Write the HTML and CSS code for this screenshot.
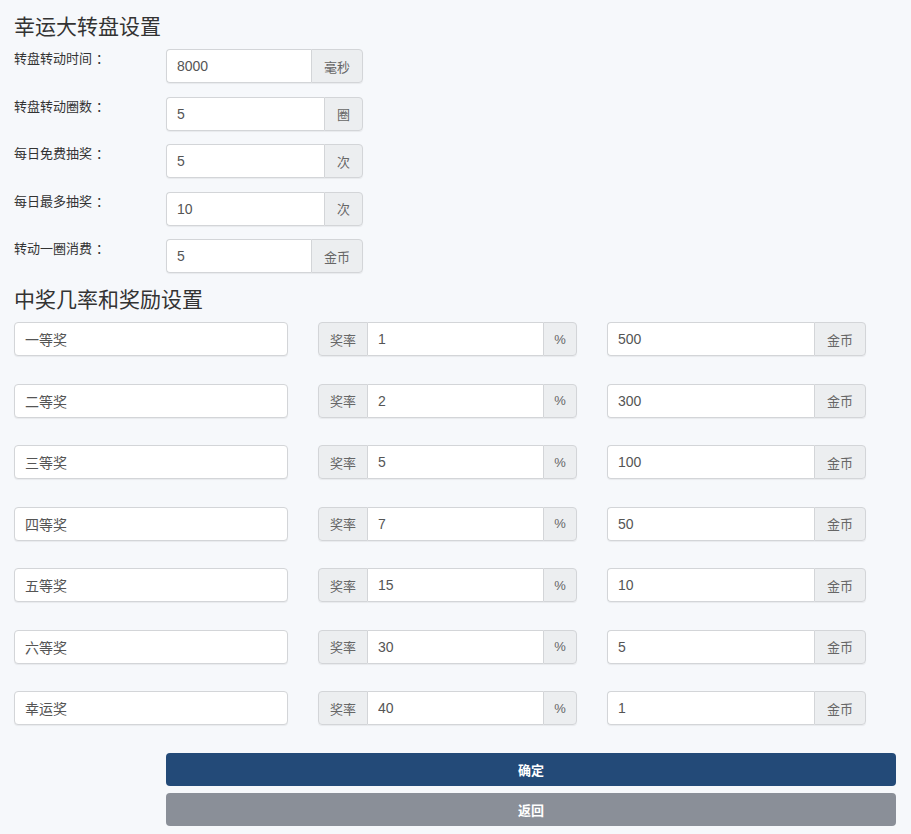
FILE: index.html
```html
<!DOCTYPE html>
<html lang="zh">
<head>
<meta charset="utf-8">
<title>幸运大转盘设置</title>
<link rel="stylesheet" href="styles.css">
</head>
<body>
<div class="page">
  <h2 class="title first">幸运大转盘设置</h2>
  <div class="row">
    <label class="label">转盘转动时间<span class="colon">：</span></label>
    <div class="group g-basic"><input class="ctrl" value="8000"><span class="addon">毫秒</span></div>
  </div>
  <div class="row">
    <label class="label">转盘转动圈数<span class="colon">：</span></label>
    <div class="group g-basic"><input class="ctrl" value="5"><span class="addon">圈</span></div>
  </div>
  <div class="row">
    <label class="label">每日免费抽奖<span class="colon">：</span></label>
    <div class="group g-basic"><input class="ctrl" value="5"><span class="addon">次</span></div>
  </div>
  <div class="row">
    <label class="label">每日最多抽奖<span class="colon">：</span></label>
    <div class="group g-basic"><input class="ctrl" value="10"><span class="addon">次</span></div>
  </div>
  <div class="row">
    <label class="label">转动一圈消费<span class="colon">：</span></label>
    <div class="group g-basic"><input class="ctrl" value="5"><span class="addon">金币</span></div>
  </div>

  <h2 class="title second">中奖几率和奖励设置</h2>
  <div class="prizes">
    <div class="prize"><input class="ctrl solo name" value="一等奖"><div class="group g-rate"><span class="addon left">奖率</span><input class="ctrl mid" value="1"><span class="addon pct">%</span></div><div class="group g-reward"><input class="ctrl" value="500"><span class="addon">金币</span></div></div>
    <div class="prize"><input class="ctrl solo name" value="二等奖"><div class="group g-rate"><span class="addon left">奖率</span><input class="ctrl mid" value="2"><span class="addon pct">%</span></div><div class="group g-reward"><input class="ctrl" value="300"><span class="addon">金币</span></div></div>
    <div class="prize"><input class="ctrl solo name" value="三等奖"><div class="group g-rate"><span class="addon left">奖率</span><input class="ctrl mid" value="5"><span class="addon pct">%</span></div><div class="group g-reward"><input class="ctrl" value="100"><span class="addon">金币</span></div></div>
    <div class="prize"><input class="ctrl solo name" value="四等奖"><div class="group g-rate"><span class="addon left">奖率</span><input class="ctrl mid" value="7"><span class="addon pct">%</span></div><div class="group g-reward"><input class="ctrl" value="50"><span class="addon">金币</span></div></div>
    <div class="prize"><input class="ctrl solo name" value="五等奖"><div class="group g-rate"><span class="addon left">奖率</span><input class="ctrl mid" value="15"><span class="addon pct">%</span></div><div class="group g-reward"><input class="ctrl" value="10"><span class="addon">金币</span></div></div>
    <div class="prize"><input class="ctrl solo name" value="六等奖"><div class="group g-rate"><span class="addon left">奖率</span><input class="ctrl mid" value="30"><span class="addon pct">%</span></div><div class="group g-reward"><input class="ctrl" value="5"><span class="addon">金币</span></div></div>
    <div class="prize"><input class="ctrl solo name" value="幸运奖"><div class="group g-rate"><span class="addon left">奖率</span><input class="ctrl mid" value="40"><span class="addon pct">%</span></div><div class="group g-reward"><input class="ctrl" value="1"><span class="addon">金币</span></div></div>
  </div>

  <div class="actions">
    <button class="btn primary">确定</button>
    <button class="btn secondary">返回</button>
  </div>
</div>
</body>
</html>
```
FILE: styles.css
```css
html, body {
  margin: 0;
  padding: 0;
  background: #f6f8fb;
}
body {
  font-family: "Liberation Sans", "Noto Sans CJK SC", sans-serif;
  color: #333;
}
.page {
  padding: 0 14px;
}
.title {
  margin: 0;
  font-size: 21px;
  font-weight: normal;
  line-height: 26px;
  color: #333;
}
.title.first {
  padding-top: 14px;
  margin-bottom: 9px;
}
.title.second {
  margin-bottom: 9.5px;
}
.row {
  display: flex;
  align-items: flex-start;
  margin-bottom: 13.5px;
}
.label {
  width: 152px;
  flex: none;
  font-size: 13px;
  line-height: 20px;
  color: #333;
  white-space: nowrap;
}
.colon {
  display: inline-block;
  padding-left: 4px;
}
.group {
  display: flex;
  height: 34px;
  border-radius: 4px;
  box-shadow: 0 1px 1px rgba(0,0,0,.06);
}
.g-basic { width: 197px; }
.g-rate { width: 259px; margin-left: 30px; }
.g-reward { width: 259px; margin-left: 30px; }
.ctrl {
  box-sizing: border-box;
  height: 34px;
  flex: 1 1 auto;
  min-width: 0;
  margin: 0;
  padding: 0 10px;
  border: 1px solid #d3d5d8;
  border-right: 0;
  border-radius: 4px 0 0 4px;
  background: #fff;
  font-family: "Liberation Sans", "Noto Sans CJK SC", sans-serif;
  font-size: 14px;
  color: #555;
  outline: none;
}
.ctrl.solo {
  border-right: 1px solid #d3d5d8;
  border-radius: 4px;
  box-shadow: 0 1px 1px rgba(0,0,0,.06);
}
.ctrl.mid {
  border-radius: 0;
  border-left: 0;
}
.name {
  width: 274px;
  flex: none;
}
.addon {
  box-sizing: border-box;
  flex: none;
  height: 34px;
  padding: 0 12px;
  display: flex;
  align-items: center;
  justify-content: center;
  white-space: nowrap;
  background: #eceef0;
  border: 1px solid #d3d5d8;
  border-radius: 0 4px 4px 0;
  font-size: 13px;
  color: #666;
}
.addon.left {
  width: 50px;
  padding: 0;
  border-radius: 4px 0 0 4px;
  border-right: 1px solid #d3d5d8;
}
.addon.pct {
  width: 34px;
  padding: 0;
}
.prize {
  display: flex;
  margin-bottom: 27.5px;
}
.prize:last-child {
  margin-bottom: 28px;
}
.actions {
  margin-left: 152px;
  width: 730px;
  display: flex;
  flex-direction: column;
  gap: 7px;
}
.btn {
  height: 33px;
  border: 0;
  border-radius: 4px;
  color: #fff;
  font-family: "Liberation Sans", "Noto Sans CJK SC", sans-serif;
  font-size: 13px;
  font-weight: bold;
  cursor: pointer;
}
.btn.primary { background: #234a78; }
.btn.secondary { background: #8a8f98; }
```
